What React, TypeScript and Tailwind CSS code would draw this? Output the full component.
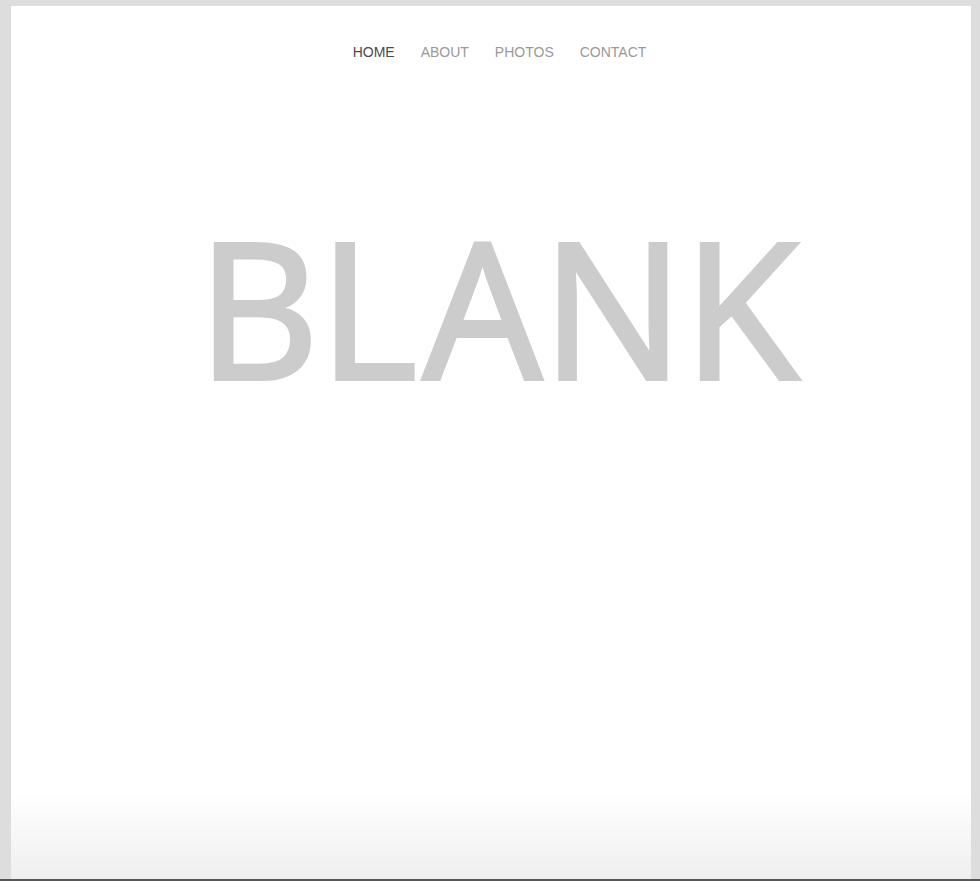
const links = ['HOME', 'ABOUT', 'PHOTOS', 'CONTACT'];

const App = () => {
  return (
    <div className="h-[881px] bg-[#dddddd] pt-[6px] pl-[11px] pr-[9px] flex flex-col overflow-hidden">
      <div className="flex-1 bg-gradient-to-b from-white from-[90%] to-[#efefef] flex flex-col">
        <nav className="flex justify-center gap-[26px] pt-[38px] pl-[17px] font-['Liberation_Sans',Arial,sans-serif] text-[14px] leading-[16px]">
          {links.map((label, i) => (
            <a
              key={label}
              href="#"
              className={i === 0 ? 'text-[#4a4a4a]' : 'text-[#999999]'}
            >
              {label}
            </a>
          ))}
        </nav>
        <h1 className="mt-[146px] pl-[14px] text-center font-['Open_Sans',sans-serif] text-[188px] leading-[200px] text-[#cccccc] [-webkit-text-stroke:4px_#cccccc] [paint-order:stroke]">
          <span>BL</span>
          <span className="ml-[6px]">ANK</span>
        </h1>
      </div>
      <div className="h-[2px] bg-[#55575c] -ml-[11px] -mr-[9px]" />
    </div>
  );
};

export default App;
